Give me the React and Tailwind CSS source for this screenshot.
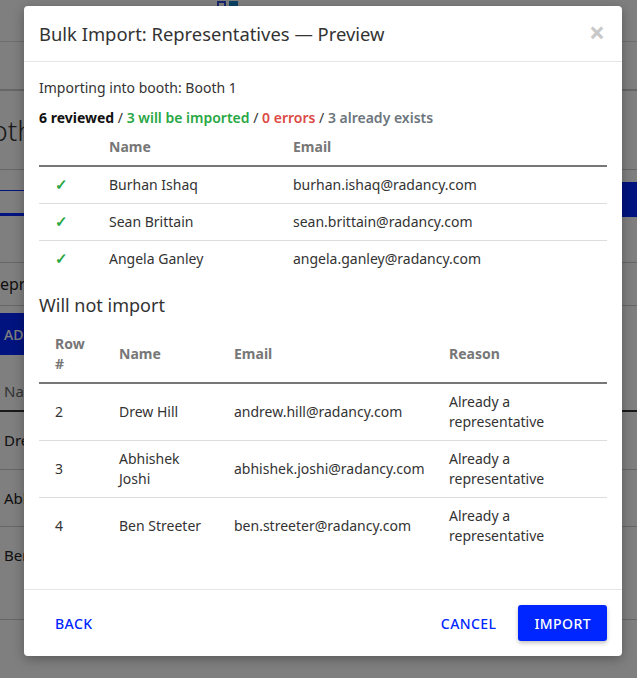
const IMPORTED = [
  { name: "Burhan Ishaq", email: "burhan.ishaq@radancy.com" },
  { name: "Sean Brittain", email: "sean.brittain@radancy.com" },
  { name: "Angela Ganley", email: "angela.ganley@radancy.com" },
];

const SKIPPED = [
  { row: 2, name: "Drew Hill", email: "andrew.hill@radancy.com" },
  { row: 3, name: "Abhishek Joshi", email: "abhishek.joshi@radancy.com" },
  { row: 4, name: "Ben Streeter", email: "ben.streeter@radancy.com" },
];

function BackgroundPage() {
  return (
    <div className="flex flex-col text-[#222]">
      <div className="h-[42px] border-b border-[#ddd] flex items-start pl-[217px]">
        <div className="flex gap-[3px] pt-[1px]">
          <div className="w-[9px] h-[12px] border-2 border-[#3350d8]" />
          <div className="w-[9px] h-[12px] bg-[#1a86c8]" />
        </div>
      </div>
      <div className="h-[49px] border-b-2 border-[#ccc]" />
      <div className="h-[79px] border-b border-[#ccc] flex items-center">
        <span className="ml-[-43px] text-[28px] font-light text-[#333]">Booth 1</span>
      </div>
      <div className="h-[47px] flex">
        <div className="w-[300px] pt-[20px]">
          <div className="h-[26px] border-t border-b-[3px] border-[#0026ff]" />
        </div>
        <div className="flex-1 flex items-end justify-end">
          <div className="w-[120px] h-[35px] bg-[#0026ff]" />
        </div>
      </div>
      <div className="h-[46px] border-b border-[#ccc]" />
      <div className="h-[43px] border-b border-[#ccc] flex items-center">
        <span className="ml-[-10px] text-[16px]">Representatives</span>
      </div>
      <div className="h-[49px] pt-[7px]">
        <div className="ml-[-12px] w-[120px] h-[42px] bg-[#0026ff] flex items-center pl-[16px] text-white text-[14px] font-medium">
          ADD
        </div>
      </div>
      <div className="h-[57px] border-b-2 border-[#333] flex items-end pb-[8px] pl-[4px] text-[15px] text-[#666]">
        Name
      </div>
      <div className="h-[58px] border-b border-[#ccc] flex items-center pl-[4px] text-[15px]">Drew Hill</div>
      <div className="h-[57px] border-b border-[#ccc] flex items-center pl-[4px] text-[15px]">Abhishek Joshi</div>
      <div className="h-[93px] border-b border-[#ccc] pt-[17px] pl-[4px] text-[15px]">Ben Streeter</div>
    </div>
  );
}

function Check() {
  return <span className="text-[#28a745] text-[15px] leading-none font-semibold">✓</span>;
}

export default function App() {
  return (
    <div className="relative w-[637px] h-[678px] overflow-hidden bg-white font-['Noto_Sans',sans-serif]">
      <BackgroundPage />
      <div className="absolute inset-0 bg-black/50 flex justify-start items-start pt-[6px] pl-[24px]">
        <div className="w-[598px] bg-white rounded-[4px] shadow-[0_3px_12px_rgba(0,0,0,0.3)] flex flex-col text-[#333]">
          <div className="h-[56px] flex items-center justify-between pl-[15px] pr-[17px] border-b border-[#e5e5e5]">
            <h1 className="text-[18.4px] leading-[27px] text-[#333]">
              Bulk Import: Representatives — Preview
            </h1>
            <span className="text-[28px] leading-none font-bold text-[#c8c8c8] mt-[-4px]">×</span>
          </div>

          <div className="px-[15px] pt-[15px] pb-[35px] text-[14px]">
            <p className="leading-[21px]">Importing into booth: Booth 1</p>
            <p className="mt-[9px] leading-[21px]">
              <span className="font-bold text-[#111]">6 reviewed</span>
              <span> / </span>
              <span className="font-semibold text-[#28a745]">3 will be imported</span>
              <span> / </span>
              <span className="font-semibold text-[#dc4a45]">0 errors</span>
              <span> / </span>
              <span className="font-semibold text-[#6c757d]">3 already exists</span>
            </p>

            <table className="w-full table-fixed border-collapse mt-[1px]">
              <thead>
                <tr className="border-b-2 border-[#777]">
                  <th className="w-[54px]" />
                  <th className="w-[184px] text-left font-bold text-[#777] px-4 pt-[7px] pb-[8px] leading-[21px]">Name</th>
                  <th className="text-left font-bold text-[#777] px-4 pt-[7px] pb-[8px] leading-[21px]">Email</th>
                </tr>
              </thead>
              <tbody>
                {IMPORTED.map((r, i) => (
                  <tr key={r.email} className={i < IMPORTED.length - 1 ? "border-b border-[#ddd]" : ""}>
                    <td className="px-4 h-[37px] leading-[21px]">
                      <Check />
                    </td>
                    <td className="px-4 h-[37px] leading-[21px]">{r.name}</td>
                    <td className="px-4 h-[37px] leading-[21px]">{r.email}</td>
                  </tr>
                ))}
              </tbody>
            </table>

            <h2 className="mt-[15px] text-[18px] leading-[27px] text-[#333]">Will not import</h2>

            <table className="w-full table-fixed border-collapse mt-[7px]">
              <thead>
                <tr className="border-b-2 border-[#777]">
                  <th className="w-[64px] text-left font-bold text-[#777] px-4 py-2 leading-[20px]">Row #</th>
                  <th className="w-[115px] text-left font-bold text-[#777] px-4 py-2 leading-[20px]">Name</th>
                  <th className="w-[215px] text-left font-bold text-[#777] px-4 py-2 leading-[20px]">Email</th>
                  <th className="text-left font-bold text-[#777] px-4 py-2 leading-[20px]">Reason</th>
                </tr>
              </thead>
              <tbody>
                {SKIPPED.map((r, i) => (
                  <tr key={r.row} className={i < SKIPPED.length - 1 ? "border-b border-[#ddd]" : ""}>
                    <td className="px-4 py-2 leading-[20px]">{r.row}</td>
                    <td className="px-4 py-2 leading-[20px]">{r.name}</td>
                    <td className="pl-4 pr-1 py-2 leading-[20px]">{r.email}</td>
                    <td className="px-4 py-2 leading-[20px]">Already a representative</td>
                  </tr>
                ))}
              </tbody>
            </table>
          </div>

          <div className="border-t border-[#e5e5e5] px-[15px] py-[15px] flex items-center justify-between">
            <button className="h-[36px] px-4 text-[14px] font-medium tracking-[0.03em] text-[#0026ff]">BACK</button>
            <div className="flex items-center gap-[6px]">
              <button className="h-[36px] px-4 text-[14px] font-medium tracking-[0.03em] text-[#0026ff]">CANCEL</button>
              <button className="h-[36px] px-4 text-[14px] font-medium tracking-[0.03em] text-white bg-[#0026ff] rounded-[3px] shadow-[0_2px_4px_rgba(0,0,0,0.25)]">
                IMPORT
              </button>
            </div>
          </div>
        </div>
      </div>
    </div>
  );
}
